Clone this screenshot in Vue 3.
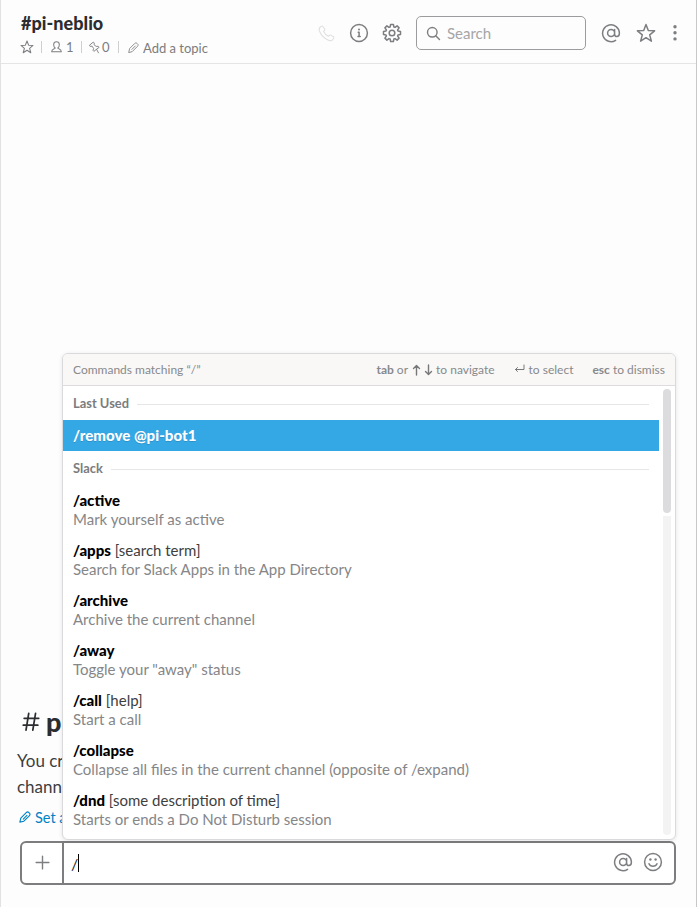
<script setup>
const commands = [
  { name: '/active', desc: 'Mark yourself as active' },
  { name: '/apps', args: '[search term]', desc: 'Search for Slack Apps in the App Directory' },
  { name: '/archive', desc: 'Archive the current channel' },
  { name: '/away', desc: 'Toggle your "away" status' },
  { name: '/call', args: '[help]', desc: 'Start a call' },
  { name: '/collapse', desc: 'Collapse all files in the current channel (opposite of /expand)' },
  { name: '/dnd', args: '[some description of time]', desc: 'Starts or ends a Do Not Disturb session' },
]
</script>

<template>
  <div class="app">
    <svg class="defs" width="0" height="0">
      <symbol id="star" viewBox="0 0 20 20">
        <path d="M10 1.500l2.300 5.900 6.300.4-4.900 4.100 1.700 6.300L10 14.700l-5.400 3.500 1.700-6.300-4.900-4.100 6.300-.4z" />
      </symbol>
      <symbol id="pencil" viewBox="0 0 14 14">
        <path d="M1 13l1.100-4.700 6.300-6.300c1.200-1.200 2.300-1 3.100-.2l.7.700c.8.8 1 1.900-.2 3.100l-6.300 6.300zM5 9.400l4.300-4.300" />
      </symbol>
      <symbol id="at" viewBox="0 0 20 20">
        <path d="M14.600 17.300A8.400 8.400 0 1 1 18.400 10c0 2.300-.9 3.600-2.500 3.600s-2.300-1.100-2.300-2.600V6.600M13.600 10a3.500 3.500 0 1 1-7 0 3.500 3.500 0 0 1 7 0z" />
      </symbol>
    </svg>

    <header class="header">
      <div class="channel">
        <h1>#pi-neblio</h1>
        <div class="meta">
          <svg class="m-star"><use href="#star" /></svg>
          <i class="sep" />
          <svg class="m-user" viewBox="0 0 12 13"><path d="M4.600 7.600C3.300 6.700 2.900 5.500 2.900 4a3.100 3.100 0 0 1 6.200 0c0 1.500-.4 2.700-1.700 3.600.3 1 3.900.8 3.900 4H.7c0-3.200 3.600-3 3.900-4z" /></svg>
          <span class="m-count">1</span>
          <i class="sep" />
          <svg class="m-pin" viewBox="0 0 12 13"><path d="M.8 3.800L4.700.6l1.100 1.100-.3 1.700 2.300 1.900 2.300-.1.900 1.100-5.700 4.400-.9-1.100.6-2-1.500-2.500-1.900.1zM8.400 8.700l1.900 3.600" /></svg>
          <span class="m-zero">0</span>
          <i class="sep" />
          <svg class="m-pencil"><use href="#pencil" /></svg>
          <span class="topic">Add a topic</span>
        </div>
      </div>
      <div class="tools">
        <svg class="phone" viewBox="0 0 18 18"><path d="M2.200 2.400L4 1.200c.5-.3 1-.2 1.300.3l1.800 2.700c.3.5.2.9-.1 1.300L5.900 6.800c.8 2 3 4.200 5.200 5.200l1.300-1.200c.4-.3.900-.4 1.300-.1l2.700 1.700c.5.400.6.900.3 1.400l-1.200 1.800c-.8 1.200-2.400 1.400-4.300.6C7 14.400 3.300 10.700 1.600 6.600.900 4.800 1.100 3.300 2.200 2.400z" /></svg>
        <svg class="info" viewBox="0 0 20 20"><circle cx="10" cy="10" r="8.400" /><path d="M9.200 9.200h.9v4.200M9 13.500h2.200" /><circle class="fill" cx="10" cy="6.500" r="1" /></svg>
        <svg class="gear" viewBox="0 0 20 20"><path d="M8.100 4L8.600 1.500h2.800L11.900 4l1.100.4 2.100-1.500 2 2L15.600 7l.4 1.100 2.500.5v2.800l-2.500.5-.4 1.100 1.500 2.100-2 2-2.100-1.500-1.100.4-.5 2.500H8.600L8.100 16 7 15.600l-2.100 1.500-2-2L4.400 13 4 11.900l-2.500-.5V8.600L4 8.100 4.400 7 2.900 4.900l2-2L7 4.400z" /><circle cx="10" cy="10" r="2.800" /></svg>
        <div class="search">
          <svg viewBox="0 0 16 16"><circle cx="6.700" cy="6.700" r="5.100" /><path d="M10.400 10.400l4 4" /></svg>
          <span>Search</span>
        </div>
        <svg class="h-at"><use href="#at" /></svg>
        <svg class="h-star"><use href="#star" /></svg>
        <svg class="dots" viewBox="0 0 4 18"><circle cx="2" cy="2.700" r="1.700" /><circle cx="2" cy="8.800" r="1.700" /><circle cx="2" cy="14.900" r="1.700" /></svg>
      </div>
    </header>

    <main class="history">
      <h2><svg viewBox="0 0 18 22"><path d="M6.500 1.500L3.500 20M14 1.500l-3 18.500M1.500 7h16M.500 14.500h16" /></svg>p</h2>
      <p>You cr<br />chann</p>
      <a><svg><use href="#pencil" /></svg>Set a</a>
    </main>

    <footer class="composer">
      <div class="plus"><svg viewBox="0 0 16 16"><path d="M8 1.200v13.600M1.200 8h13.600" /></svg></div>
      <div class="input"><span>/</span><i class="caret" /></div>
      <svg class="c-at"><use href="#at" /></svg>
      <svg class="smile" viewBox="0 0 20 20"><circle cx="10" cy="10" r="8.400" /><path d="M6 11.800c1.300 3.200 6.700 3.200 8 0" /><circle class="fill" cx="7.400" cy="7.500" r="1.200" /><circle class="fill" cx="12.600" cy="7.500" r="1.200" /></svg>
    </footer>

    <section class="popup">
      <div class="popup-head">
        <span class="matching">Commands matching “/”</span>
        <span class="hint nav"><b>tab</b> or
          <svg viewBox="0 0 9 12"><path d="M4.500 11V1.600M1.500 4.500l3-3 3 3" /></svg>
          <svg viewBox="0 0 9 12"><path d="M4.500 1v9.400M1.500 7.500l3 3 3-3" /></svg>
          to navigate</span>
        <span class="hint sel"><svg class="ret" viewBox="0 0 11 9"><path d="M10 0v4.500H1.500M3.500 2.500l-2 2 2 2" /></svg>to select</span>
        <span class="hint esc"><b>esc</b> to dismiss</span>
      </div>
      <div class="popup-body">
        <div class="list">
          <div class="group"><span>Last Used</span></div>
          <div class="selected">/remove @pi-bot1</div>
          <div class="group"><span>Slack</span></div>
          <div v-for="c in commands" :key="c.name" class="item">
            <div class="title"><b>{{ c.name }}</b>{{ c.args ? ' ' + c.args : '' }}</div>
            <div class="desc">{{ c.desc }}</div>
          </div>
        </div>
        <div class="scroll"><div class="thumb" /><div class="track" /></div>
      </div>
    </section>
  </div>
</template>

<style>
body { margin: 0; background: #fdfdfd; }
</style>

<style scoped>
* { box-sizing: border-box; }
.app {
  position: relative;
  display: flex;
  flex-direction: column;
  width: 697px;
  height: 907px;
  overflow: hidden;
  background: #fdfdfd;
  border-left: 1px solid #e2e2e2;
  border-right: 1px solid #c8c8c8;
  font-family: Lato, sans-serif;
  color: #2c2d30;
}
.defs { position: absolute; }
svg { flex: none; fill: none; stroke: #7d7e81; stroke-width: 1.5; stroke-linejoin: round; stroke-linecap: round; overflow: visible; }
.fill { fill: #7d7e81; stroke: none; }
h1, h2, p { margin: 0; }

.header { display: flex; flex: none; justify-content: space-between; height: 64px; border-bottom: 1px solid #e5e5e5; }
.channel { padding: 12px 0 0 20px; }
h1 { font-size: 18px; line-height: 23px; font-weight: 900; letter-spacing: .04px; }
.meta { display: flex; align-items: center; height: 20px; margin-top: 2px; margin-left: -1px; font-size: 13px; color: #7b7c7e; }
.meta svg { stroke-width: 1.100; }
.sep { width: 1px; height: 12px; background: #cfcfcf; }
.meta .m-star { width: 14px; height: 14px; margin-right: 7px; stroke-width: 1.500; }
.m-user { width: 11px; height: 12px; margin: 0 4px 0 9px; }
.m-count { width: 15px; }
.meta .m-pin { width: 11px; height: 13px; margin: 0 2px 0 7px; stroke-width: 1; }
.m-zero { width: 16px; }
.m-pencil { width: 11px; height: 11px; margin: 0 4px 0 9px; }
.topic { padding-top: 1px; }

.tools { display: flex; align-items: center; height: 66px; padding-right: 19px; }
.phone { width: 17px; height: 17px; margin-right: 14px; stroke: #dfdfdf; stroke-width: 1.100; }
.info, .gear, .h-at, .h-star, .c-at, .smile { width: 20px; height: 20px; }
.gear { margin: 0 14px 0 13px; }
.search { display: flex; align-items: center; gap: 6px; width: 170px; height: 34px; margin-right: 15px; padding-left: 9px; border: 1px solid #9c9c9e; border-radius: 5px; font-size: 15px; color: #a5a5a7; }
.search svg { width: 15px; height: 15px; }
.h-star { margin: 0 17px 0 15px; }
.dots { width: 4px; height: 18px; fill: #7d7e81; stroke: none; }

.history { display: flex; flex: 1; flex-direction: column; justify-content: flex-end; padding: 0 0 13px 16px; }
h2 { display: flex; align-items: center; gap: 6px; height: 36px; padding-left: 5px; font-size: 27px; font-weight: 900; line-height: 36px; }
h2 svg { width: 18px; height: 20px; stroke: #2c2d30; stroke-width: 1.900; }
p { margin-top: 8px; font-size: 17px; line-height: 26px; color: #3d3e40; }
a { display: flex; align-items: center; gap: 5px; height: 22px; margin-top: 6px; padding-left: 2px; font-size: 14.500px; color: #0082c4; }
a svg { width: 12px; height: 12px; margin-right: -1px; stroke: #0082c4; stroke-width: 1.300; }

.composer { display: flex; flex: none; align-items: center; width: 656px; height: 44px; margin: 0 0 22px 19px; border: 2px solid #7d7d7f; border-radius: 6px; background: #fff; }
.plus { display: flex; align-items: center; justify-content: center; width: 42px; height: 40px; padding: 0 0 2px 1px; border-right: 2px solid #7d7d7f; }
.plus svg { width: 15px; height: 15px; }
.input { display: flex; flex: 1; align-items: center; padding-left: 7px; font-size: 16px; }
.caret { width: 1px; height: 18px; background: #000; }
.c-at { margin: 0 10px 2px 0; }
.smile { margin: 0 11px 2px 0; }

.popup { position: absolute; left: 61px; top: 353px; width: 614px; height: 487px; overflow: hidden; background: #fff; border: 1px solid #dadadc; border-radius: 6px; box-shadow: 0 1px 4px rgba(0, 0, 0, .1); }
.popup-head { display: flex; align-items: center; height: 32px; padding: 0 10px; background: #f9f8f7; border-bottom: 1px solid #dddddf; font-size: 12px; color: #88898b; white-space: nowrap; }
.matching { flex: 1; }
.hint { display: flex; align-items: center; gap: 3px; }
.hint svg { width: 9px; height: 12px; stroke: #77787a; stroke-width: 1.400; }
.nav svg:first-of-type { margin-left: 1px; }
.hint .ret { width: 11px; height: 9px; stroke-width: 1; margin-right: 1px; }
.sel { margin: 0 19px 0 19px; }
.popup-body { display: flex; height: 453px; }
.list { width: 596px; }
.group { display: flex; align-items: center; gap: 8px; height: 34px; padding: 0 10px; font-size: 12.900px; font-weight: 700; color: #7b7c7e; }
.group::after { content: ''; flex: 1; height: 1px; margin-top: 3px; background: #e6e6e6; }
.selected { height: 31px; padding-left: 10px; background: #34a7e5; color: #fff; font-size: 15px; font-weight: 900; line-height: 31px; letter-spacing: .04px; text-shadow: 0 1px 0 rgba(0, 0, 0, .15); }
.item { height: 50px; padding: 6px 10px; font-size: 15px; line-height: 19px; white-space: nowrap; }
.title { color: #3d3e40; }
.title b { font-weight: 900; color: #000; }
.desc { color: #858688; }
.scroll { display: flex; flex-direction: column; gap: 3px; width: 8px; margin: 3px 0 4px 4px; }
.thumb { height: 124px; border-radius: 4px; background: #dcdcde; }
.track { flex: 1; border-radius: 0 0 4px 4px; background: #f3f3f3; }
</style>
